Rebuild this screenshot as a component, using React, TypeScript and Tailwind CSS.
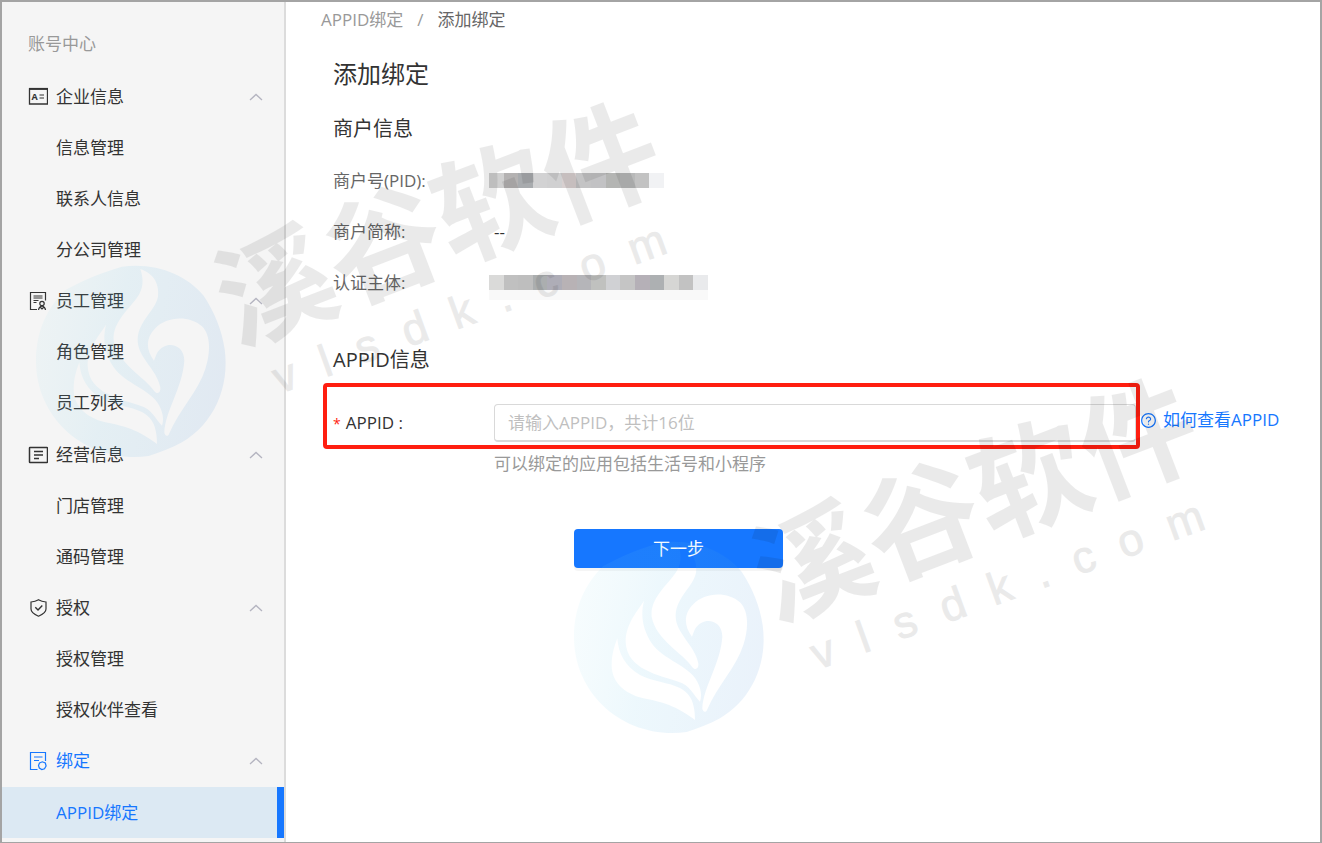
import React, { useState } from 'react';
import { AiOutlineQuestionCircle } from 'react-icons/ai';

interface MenuGroup {
  title: string;
  icon: React.ReactNode;
  items: string[];
}

const iconProps = {
  width: 20,
  height: 20,
  viewBox: '0 0 20 20',
  fill: 'none',
  stroke: 'currentColor',
  className: 'shrink-0',
  'aria-hidden': true,
};

const CompanyIcon = () => (
  <svg {...iconProps}>
    <path d="M1.5 2h18v15h-18z" strokeWidth="1.3" />
    <path d="M1 1.8h19" strokeWidth="1.8" />
    <text x="3.5" y="12.5" fontSize="9" fontWeight="700" fill="currentColor" stroke="none">A</text>
    <path d="M11.5 8h4.5M11.5 11h4.5" />
  </svg>
);

const StaffIcon = () => (
  <svg {...iconProps}>
    <path d="M9 18.5H2.5v-17h15v8" strokeWidth="1.2" />
    <path d="M5.5 5h9M5.5 7h9M5.5 9.5h5M5.5 11.5h3" />
    <circle cx="14" cy="12.5" r="2.2" strokeWidth="1.2" />
    <path d="M10.5 19c.3-2.2 1.5-3.5 3.5-4 2 .5 3.2 1.8 3.5 4M12.5 16.500l1.500 1.500 1.500-1.500" strokeWidth="1.2" />
  </svg>
);

const BusinessIcon = () => (
  <svg {...iconProps}>
    <rect x="1.5" y="2.5" width="18" height="15" rx="0.5" strokeWidth="1.5" />
    <path d="M6 6.5h9M6 10h9M6 13.5h5" strokeWidth="1.4" />
  </svg>
);

const AuthIcon = () => (
  <svg {...iconProps}>
    <path d="M10.5 1.8c2.5 1.5 4.8 2 7.500 2.200v7c0 3-3.500 5.500-7.500 7.200-4-1.700-7.500-4.200-7.500-7.200V4c2.700-.2 5-.7 7.500-2.200z" strokeWidth="1.2" />
    <path d="M7.300 9.300l2.700 2.700 4.300-4.500" strokeWidth="1.4" />
  </svg>
);

const BindIcon = () => (
  <svg {...iconProps}>
    <path d="M9.5 18.5h-7v-17h15v8.500" strokeWidth="1.2" />
    <path d="M6 6h8.500M6 9.500h5" strokeWidth="1.2" />
    <path d="M11.500 12l2.800-1.200 3 1.200.8 3-1.600 2.800-2.700.7-2.500-1.500-.8-2.500z" strokeWidth="1.2" />
  </svg>
);

const menu: MenuGroup[] = [
  { title: '企业信息', icon: <CompanyIcon />, items: ['信息管理', '联系人信息', '分公司管理'] },
  { title: '员工管理', icon: <StaffIcon />, items: ['角色管理', '员工列表'] },
  { title: '经营信息', icon: <BusinessIcon />, items: ['门店管理', '通码管理'] },
  { title: '授权', icon: <AuthIcon />, items: ['授权管理', '授权伙伴查看'] },
  { title: '绑定', icon: <BindIcon />, items: ['APPID绑定'] },
];

const ACTIVE_ITEM = 'APPID绑定';

function Sidebar() {
  const [closed, setClosed] = useState<string[]>([]);

  const toggle = (title: string) => {
    setClosed((prev) => (prev.includes(title) ? prev.filter((t) => t !== title) : [...prev, title]));
  };

  return (
    <aside className="flex w-[284px] shrink-0 flex-col border-r-2 border-[#dcdcdc] bg-[#f5f5f5] pb-1">
      <h2 className="px-[26px] pt-[29px] pb-[14px] leading-[26px] text-[#999]">账号中心</h2>
      <nav className="flex grow flex-col">
        {menu.map((group) => {
          const isOpen = !closed.includes(group.title);
          const isCurrent = group.items.includes(ACTIVE_ITEM);
          return (
            <React.Fragment key={group.title}>
              <button
                type="button"
                onClick={() => toggle(group.title)}
                aria-expanded={isOpen}
                className={`flex max-h-[52px] min-h-[51px] flex-1 cursor-pointer items-center gap-2 pr-[21px] pl-[26px] text-left ${
                  isCurrent ? 'text-[#1677ff]' : 'text-[#333]'
                }`}
              >
                {group.icon}
                <span className="grow">{group.title}</span>
                <svg
                  width="14"
                  height="8"
                  viewBox="0 0 14 8"
                  fill="none"
                  stroke="#b4b4c0"
                  strokeWidth="1.3"
                  className={isOpen ? '' : 'rotate-180'}
                  aria-hidden
                >
                  <path d="M1 7l6-5.500L13 7" />
                </svg>
              </button>
              {isOpen && group.items.map((item) => (
                <a
                  key={item}
                  href="#"
                  className={`flex max-h-[52px] min-h-[51px] flex-1 items-center pl-[54px] ${
                    item === ACTIVE_ITEM
                      ? 'border-r-[7px] border-[#1677ff] bg-[#dce9f3] text-[#1677ff]'
                      : 'text-[#333]'
                  }`}
                >
                  {item}
                </a>
              ))}
            </React.Fragment>
          );
        })}
      </nav>
    </aside>
  );
}

// Masked values, one colour per block
const pidBlocks = ['#d0d0d0', '#b4b2b2', '#a8abae', '#d2d2d3', '#d0d0d1', '#d8d0d0', '#c4c4c5', '#c2c2c4', '#b4b5b3', '#b8b9b9', '#c2c2c2', '#f1f2f4'];
const ownerBlocks = ['#dadad9', '#c0c0c0', '#bebebe', '#abaeaf', '#aeadb7', '#b8b2b5', '#b5b5b9', '#c0c1bf', '#d0d1d4', '#c5c5c5', '#b5b0b7', '#adb0b2', '#d6d6d4', '#c2c2c2', '#e9eaec'];

function Mosaic({ blocks, className }: { blocks: string[]; className: string }) {
  return (
    <span className={`-ml-[5px] flex h-[15px] ${className}`} role="img" aria-label="已隐藏">
      {blocks.map((color, i) => (
        <span key={i} className="grow" style={{ backgroundColor: color }} />
      ))}
    </span>
  );
}

function Watermark({ id, className }: { id: string; className: string }) {
  return (
    <svg
      width="640"
      height="375"
      viewBox="0 0 640 375"
      className={`pointer-events-none absolute overflow-visible ${className}`}
      aria-hidden
    >
      <defs>
        <linearGradient id={id} x1="0" y1="0.4" x2="1" y2="0.6">
          <stop offset="0" stopColor="rgb(130,215,235)" stopOpacity="0.07" />
          <stop offset="0.4" stopColor="rgb(90,190,232)" stopOpacity="0.11" />
          <stop offset="1" stopColor="rgb(63,137,216)" stopOpacity="0.11" />
        </linearGradient>
      </defs>
      <g transform="translate(-14 4) scale(0.3333)">
        <path
          fill={`url(#${id})`}
          fillRule="evenodd"
          d="M42 800C42 712 76 640 130 588C185 558 240 535 300 518C400 505 490 540 545 605C578 655 600 710 608 765C624 880 575 990 480 1045C450 1062 415 1075 380 1086C200 1110 42 980 42 800Z
            M355 525C400 540 412 575 408 608C400 650 350 680 347 735C345 790 405 825 415 880C417 898 405 902 396 890C370 850 288 810 275 740C270 680 330 640 352 600C366 575 363 550 355 525Z
            M252 692C240 740 250 780 275 820C310 870 385 885 412 935C425 960 425 980 420 995C400 975 390 945 355 935C300 915 200 900 197 815C197 760 235 720 252 692Z
            M172 805C175 850 195 890 240 915C300 945 370 935 395 990C405 1015 405 1040 405 1050C370 1025 335 1000 250 985C190 970 155 935 155 885C155 850 165 825 172 805Z
            M396 800C372 768 370 732 400 703C432 668 500 662 540 697C568 725 565 780 550 825C530 890 470 950 442 1018C438 1030 428 1027 427 1015C430 950 482 880 487 800C487 758 450 745 425 758C405 768 402 785 396 800Z"
        />
      </g>
      <g fill="#000" opacity="0.08">
        <text
          transform="translate(239 195) rotate(-21)"
          x="-58"
          y="44"
          fontSize="116"
          className="font-['Noto_Sans_CJK_SC',sans-serif] font-bold"
        >
          溪谷软件
        </text>
        <text
          transform="translate(250 289) rotate(-20)"
          x="0 43 87 138 188 233 277 327 385"
          y="12"
          fontSize="45"
          textAnchor="middle"
          stroke="#000"
          className="font-['Liberation_Sans',sans-serif]"
        >
          vlsdk.com
        </text>
      </g>
    </svg>
  );
}

export default function App() {
  const [appId, setAppId] = useState('');

  return (
    <div className="relative flex min-h-screen border-2 border-b border-[#a4a4a4] bg-white font-['Open_Sans','Noto_Sans_CJK_SC',sans-serif] text-[17px] leading-[26px] text-[#333]">
      <Sidebar />

      <main className="min-w-0 grow">
        <nav className="flex h-9 items-center gap-[14px] px-[35px] text-[#999]" aria-label="breadcrumb">
          <a href="#">APPID绑定</a>
          <span>/</span>
          <span className="text-[#666]">添加绑定</span>
        </nav>

        <h1 className="mt-[18px] px-[47px] text-2xl leading-9">添加绑定</h1>

        <section className="px-[47px]">
          <h2 className="mt-[22px] text-xl leading-[30px]">商户信息</h2>
          <dl className="mt-[11px] grid auto-rows-[51px] grid-cols-[161px_1fr] items-center">
            <dt className="text-[#666]">商户号(PID):</dt>
            <dd><Mosaic blocks={pidBlocks} className="w-[175px]" /></dd>
            <dt className="text-[#666]">商户简称:</dt>
            <dd>--</dd>
            <dt className="text-[#666]">认证主体:</dt>
            <dd><Mosaic blocks={ownerBlocks} className="w-[219px] shadow-[0_10px_0_#f9f9f9]" /></dd>
          </dl>
        </section>

        <form onSubmit={(e) => e.preventDefault()}>
          <h2 className="mt-[37px] px-[47px] text-xl leading-[30px]">APPID信息</h2>
          <div className="mt-2 flex items-center pr-[38px] pl-[37px]">
            {/* Highlighted required field */}
            <div className="flex grow items-center rounded-[4px] border-4 border-[#ff1e10] pt-[17px] pb-[3px] pl-[6px]">
              <label htmlFor="appid" className="w-[161px] shrink-0">
                <span className="mr-[5px] text-sm text-[#ff1e10]">*</span>
                APPID :
              </label>
              <input
                id="appid"
                type="text"
                value={appId}
                onChange={(e) => setAppId(e.target.value)}
                placeholder="请输入APPID，共计16位"
                className="h-[38px] min-w-0 grow rounded-[4px] border border-b-2 border-[#d9d9d9] bg-white px-[13px] outline-none placeholder:text-[#bfbfbf] focus:border-[#1677ff]"
              />
            </div>
            <a href="#" className="flex w-[142px] shrink-0 items-center gap-[6px] pt-2 text-[#1677ff]">
              <AiOutlineQuestionCircle size={17} />
              如何查看APPID
            </a>
          </div>
          <p className="mt-[3px] pl-[208px] leading-6 text-[#999]">可以绑定的应用包括生活号和小程序</p>
          <button
            type="submit"
            className="mt-[53px] ml-[288px] h-[39px] w-[209px] cursor-pointer rounded-[4px] bg-[#1677ff] text-white shadow-[0_3px_0_rgba(0,0,0,0.04)]"
          >
            下一步
          </button>
        </form>
      </main>

      <Watermark id="mark-left" className="top-[88px] left-[34px]" />
      <Watermark id="mark-right" className="top-[364px] left-[572px]" />
    </div>
  );
}
